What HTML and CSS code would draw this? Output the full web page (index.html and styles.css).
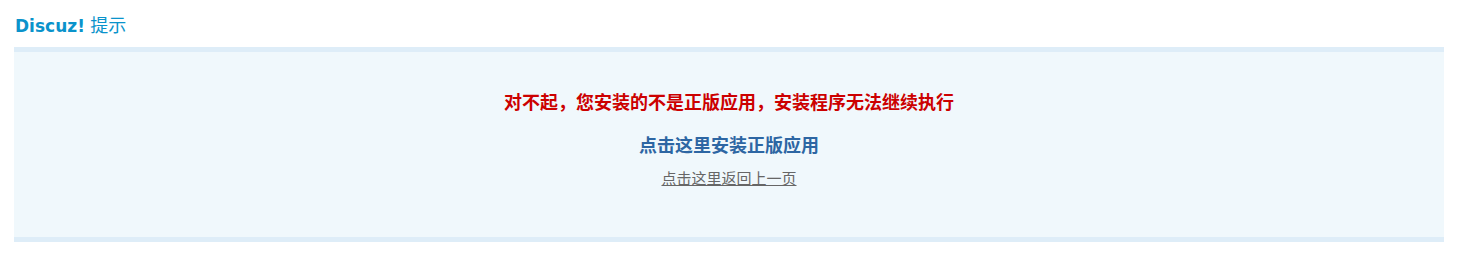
FILE: index.html
```
<!DOCTYPE html>
<html lang="zh-CN">
<head>
<meta charset="utf-8">
<title>Discuz! 提示</title>
<link rel="stylesheet" href="styles.css">
</head>
<body>
<div class="page">
  <h1 class="title"><span class="brand">Discuz!</span> <span class="tip">提示</span></h1>
  <div class="msgbox">
    <p class="err">对不起，您安装的不是正版应用，安装程序无法继续执行</p>
    <p class="install"><a href="#">点击这里安装正版应用</a></p>
    <p class="back"><a href="#">点击这里返回上一页</a></p>
  </div>
</div>
</body>
</html>
```
FILE: styles.css
```
html, body { margin: 0; padding: 0; background: #fff; }
.page { padding: 12px 23px 0 14px; }
.title {
  margin: 0 0 0 1px;
  height: 35px;
  padding-top: 0;
  box-sizing: border-box;
  font-family: "DejaVu Sans", Verdana, "Noto Sans CJK SC", sans-serif;
  font-size: 17px;
  line-height: 24px;
  font-weight: normal;
  color: #0a93cb;
  white-space: nowrap;
}
.brand { font-weight: bold; font-size: 17px; }
.tip { font-family: "Noto Sans CJK SC", sans-serif; font-size: 18px; }
.msgbox {
  background: #f0f8fc;
  border-top: 5px solid #deedf8;
  border-bottom: 5px solid #deedf8;
  text-align: center;
  padding-top: 37px;
  box-sizing: border-box;
  height: 195px;
}
.msgbox p { margin: 0; }
.err {
  font-family: "Noto Sans CJK SC", serif;
  font-weight: bold;
  font-size: 18px;
  line-height: 24px;
  color: #cc0000;
}
.install { margin-top: 19px !important; }
.install a {
  font-family: "Noto Sans CJK SC", serif;
  font-weight: bold;
  font-size: 18px;
  line-height: 24px;
  color: #2d66a3;
  text-decoration: none;
}
.back { margin-top: 12px !important; }
.back a {
  font-family: "Noto Sans CJK SC", sans-serif;
  font-size: 15px;
  line-height: 20px;
  color: #666;
  text-decoration: underline;
}
```
